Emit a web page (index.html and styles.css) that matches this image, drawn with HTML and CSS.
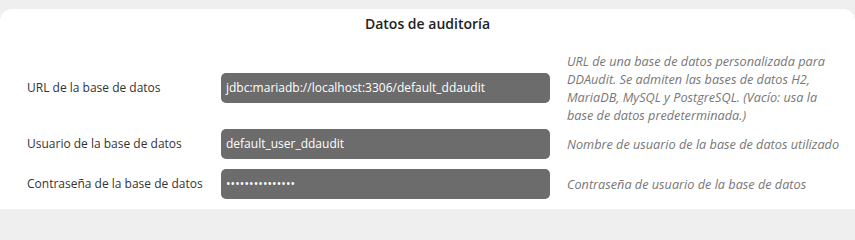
FILE: index.html
```html
<!DOCTYPE html>
<html lang="es">
<head>
<meta charset="utf-8">
<title>Datos de auditoría</title>
<link rel="stylesheet" href="styles.css">
</head>
<body>
<section class="card">
  <h2 class="title">Datos de auditoría</h2>
  <div class="form">
    <div class="row">
      <label class="label">URL de la base de datos</label>
      <div class="field">jdbc:mariadb://localhost:3306/default_ddaudit</div>
      <p class="desc">URL de una base de datos personalizada para DDAudit. Se admiten las bases de datos H2, MariaDB, MySQL y PostgreSQL. (Vacío: usa la base de datos predeterminada.)</p>
    </div>
    <div class="row">
      <label class="label">Usuario de la base de datos</label>
      <div class="field">default_user_ddaudit</div>
      <p class="desc">Nombre de usuario de la base de datos utilizado</p>
    </div>
    <div class="row">
      <label class="label">Contraseña de la base de datos</label>
      <div class="field pw">•••••••••••••••</div>
      <p class="desc">Contraseña de usuario de la base de datos</p>
    </div>
  </div>
</section>
</body>
</html>
```
FILE: styles.css
```css
html, body {
  margin: 0;
  padding: 0;
}
body {
  background: #efefef;
  font-family: "Open Sans", "Liberation Sans", sans-serif;
  color: #333;
  width: 855px;
  height: 209px;
  overflow: hidden;
}
.card {
  margin-top: 9px;
  background: #fff;
  border-radius: 12px 12px 0 0;
  padding: 5px 0 20px 27px;
  min-height: 200px;
  box-sizing: border-box;
}
.title {
  margin: 0;
  height: 20px;
  line-height: 20px;
  font-size: 14px;
  font-weight: 600;
  color: #222;
  text-align: center;
  padding-right: 27px;
}
.form {
  margin-top: 18px;
}
.row {
  display: grid;
  grid-template-columns: 177px 329px 273px;
  column-gap: 17px;
  align-items: center;
  min-height: 40px;
}
.label {
  font-size: 12px;
  line-height: 18px;
  color: #333;
  white-space: nowrap;
}
.field {
  height: 30px;
  line-height: 30px;
  background: #6c6c6c;
  border-radius: 5px;
  color: #fff;
  font-size: 12px;
  padding-left: 5px;
  box-sizing: border-box;
  white-space: nowrap;
  overflow: hidden;
}
.field.pw {
  font-size: 12px;
  letter-spacing: 0.1px;
}
.desc {
  margin: 0;
  font-size: 12.7px;
  line-height: 18px;
  font-style: italic;
  color: #777;
}
```
